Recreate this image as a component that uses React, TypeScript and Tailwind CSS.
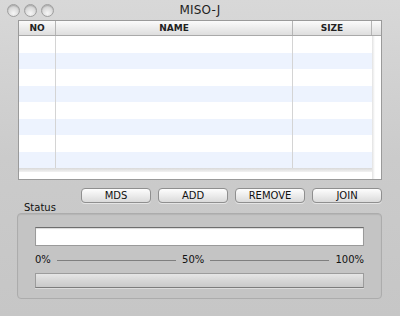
import React from "react";

const rows = [0, 1, 2, 3, 4, 5, 6, 7];

function Light() {
  return (
    <div className="w-[13px] h-[13px] rounded-full border border-[#9f9f9f] bg-[radial-gradient(circle_at_50%_75%,#f6f6f6_0%,#dadada_55%,#c2c2c2_100%)] shadow-[inset_0_1px_1px_rgba(0,0,0,0.18)]" />
  );
}

function Btn({ label }: { label: string }) {
  return (
    <div className="w-[70px] h-[15px] rounded-[4px] border border-[#8f8f8f] bg-gradient-to-b from-[#fdfdfd] via-[#ececec] to-[#dadada] shadow-[0_1px_0_rgba(255,255,255,0.5)] flex items-center justify-center text-[10px] leading-none text-[#111]">
      {label}
    </div>
  );
}

export default function App() {
  return (
    <div
      className="w-[400px] h-[316px] overflow-hidden bg-gradient-to-b from-[#d8d8d8] via-[#cbcbcb] to-[#c6c6c6] flex flex-col"
      style={{ fontFamily: '"DejaVu Sans", "Liberation Sans", sans-serif' }}
    >
      {/* Title bar */}
      <div className="h-[20px] relative flex items-center pl-[7px] gap-[4px]">
        <Light />
        <Light />
        <Light />
        <div className="absolute inset-0 flex items-center justify-center text-[12px] text-[#1e1e1e] tracking-[0.2px]">
          MISO-J
        </div>
      </div>

      {/* Table */}
      <div className="mx-[18px] h-[160px] border border-[#9a9a9a] bg-white flex flex-col">
        <div className="h-[15px] flex border-b border-[#a9a9a9] bg-gradient-to-b from-[#fbfbfb] via-[#ececec] to-[#dedede] text-[9px] font-bold text-[#222] leading-none">
          <div className="w-[37px] border-r border-[#b5b5b5] flex items-center justify-center">NO</div>
          <div className="w-[237px] border-r border-[#b5b5b5] flex items-center justify-center">NAME</div>
          <div className="w-[79px] border-r border-[#b5b5b5] flex items-center justify-center">SIZE</div>
          <div className="flex-1" />
        </div>
        <div className="flex-1 flex">
          <div className="w-[353px] flex flex-col">
            {rows.map((r) => (
              <div
                key={r}
                className={`h-[16.5px] flex ${r % 2 === 1 ? "bg-[#edf3fe]" : "bg-white"}`}
              >
                <div className="w-[37px] border-r border-[#d4d4d4]" />
                <div className="w-[237px] border-r border-[#d4d4d4]" />
                <div className="w-[79px]" />
              </div>
            ))}
            <div className="h-[4px] bg-gradient-to-b from-[#d9d9d9] to-[#f2f2f2]" />
            <div className="flex-1 bg-white" />
          </div>
          <div className="w-[3px] bg-gradient-to-r from-[#e2e2e2] to-white" />
          <div className="flex-1 bg-white" />
        </div>
      </div>

      {/* Buttons */}
      <div className="mt-[8px] mr-[18px] flex justify-end gap-[7px]">
        <Btn label="MDS" />
        <Btn label="ADD" />
        <Btn label="REMOVE" />
        <Btn label="JOIN" />
      </div>

      {/* Status label */}
      <div className="ml-[24px] h-[10px] text-[10px] leading-[10px] text-[#111]">Status</div>

      {/* Group box */}
      <div className="ml-[17px] mr-[18px] h-[86px] rounded-[4px] border border-[#acacac] bg-[#c4c4c4] shadow-[inset_0_1px_1px_rgba(0,0,0,0.08)] px-[17px] pt-[13px]">
        <div className="h-[19px] bg-white border border-[#9a9a9a] border-t-[#6e6e6e] shadow-[inset_0_1px_1px_rgba(0,0,0,0.15)]" />
        <div className="mt-[8px] h-[12px] flex items-center text-[10px] leading-none text-[#111]">
          <span>0%</span>
          <div className="flex-1 mx-[6px] h-px bg-[#7f7f7f]" />
          <span>50%</span>
          <div className="flex-1 mx-[6px] h-px bg-[#7f7f7f]" />
          <span>100%</span>
        </div>
        <div className="mt-[7px] h-[15px] border border-[#9c9c9c] border-b-[#7c7c7c] bg-gradient-to-b from-[#e6e6e6] via-[#d6d6d6] to-[#c9c9c9] shadow-[0_1px_0_rgba(255,255,255,0.4)]" />
      </div>
    </div>
  );
}
